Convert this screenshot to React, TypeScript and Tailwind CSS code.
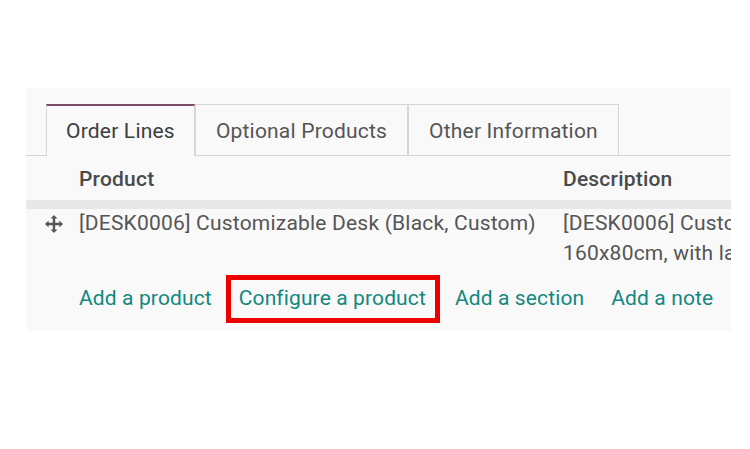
import { ReactNode } from "react";

const font = { fontFamily: "Roboto, 'Noto Sans', sans-serif" };

function Tab({ active, children }: { active?: boolean; children: ReactNode }) {
  if (active) {
    return (
      <div className="-mb-px flex h-[52px] items-center border-x border-t-2 border-x-[#d6d6d6] border-t-[#7a4b63] bg-[#f9f9f9] px-[19px] pt-[2px] text-[#3d3d3d]">
        {children}
      </div>
    );
  }
  return (
    <div className="flex h-[51px] items-center border border-b-0 border-[#d6d6d6] px-[20px] pt-[3px] text-[#555]">
      {children}
    </div>
  );
}

function MoveIcon() {
  return (
    <svg width="18" height="18" viewBox="0 0 18 18" className="text-[#555]">
      <path
        fill="currentColor"
        d="M9 0 L12.4 3.6 H10.2 V7.8 H14.4 V5.6 L18 9 L14.4 12.4 V10.2 H10.2 V14.4 H12.4 L9 18 L5.6 14.4 H7.8 V10.2 H3.6 V12.4 L0 9 L3.6 5.6 V7.8 H7.8 V3.6 H5.6 Z"
      />
    </svg>
  );
}

export default function App() {
  const links = ["Add a product", "Configure a product", "Add a section", "Add a note"];
  return (
    <div className="h-[449px] w-[750px] bg-white pl-[26px] pt-[88px]" style={font}>
      <div className="h-[243px] w-[705px] overflow-hidden bg-[#f9f9f9] pt-[16px] text-[21px] tracking-[0.2px]">
        {/* tabs */}
        <div className="flex border-b border-[#d6d6d6] pl-[20px]">
          <Tab active>Order Lines</Tab>
          <Tab>Optional Products</Tab>
          <Tab>Other Information</Tab>
        </div>

        {/* header */}
        <div className="flex h-[44px] items-center pt-[4px] font-medium text-[#4a4a4a]">
          <div className="w-[537px] shrink-0 pl-[53px]">Product</div>
          <div>Description</div>
        </div>
        <div className="h-[9px] bg-[#e8e8e8]" />

        {/* row */}
        <div className="-mt-px flex leading-[30px] text-[#555]">
          <div className="flex w-[537px] shrink-0">
            <div className="flex h-[30px] w-[53px] shrink-0 items-center justify-center self-start pl-[2px] pt-[2px]">
              <MoveIcon />
            </div>
            <div className="whitespace-nowrap">[DESK0006] Customizable Desk (Black, Custom)</div>
          </div>
          <div className="whitespace-nowrap">
            <div>[DESK0006] Customizable Desk</div>
            <div>160x80cm, with large legs.</div>
          </div>
        </div>

        {/* links */}
        <div className="mt-[7px] flex items-center pl-[53px] tracking-[0.12px] text-[#13877f]">
          <div>{links[0]}</div>
          <div className="ml-[14px] flex h-[48px] items-center border-[5px] border-[#ee0000] pl-[8px] pr-[9px]">
            {links[1]}
          </div>
          <div className="ml-[15px]">{links[2]}</div>
          <div className="ml-[27px]">{links[3]}</div>
        </div>
      </div>
    </div>
  );
}
